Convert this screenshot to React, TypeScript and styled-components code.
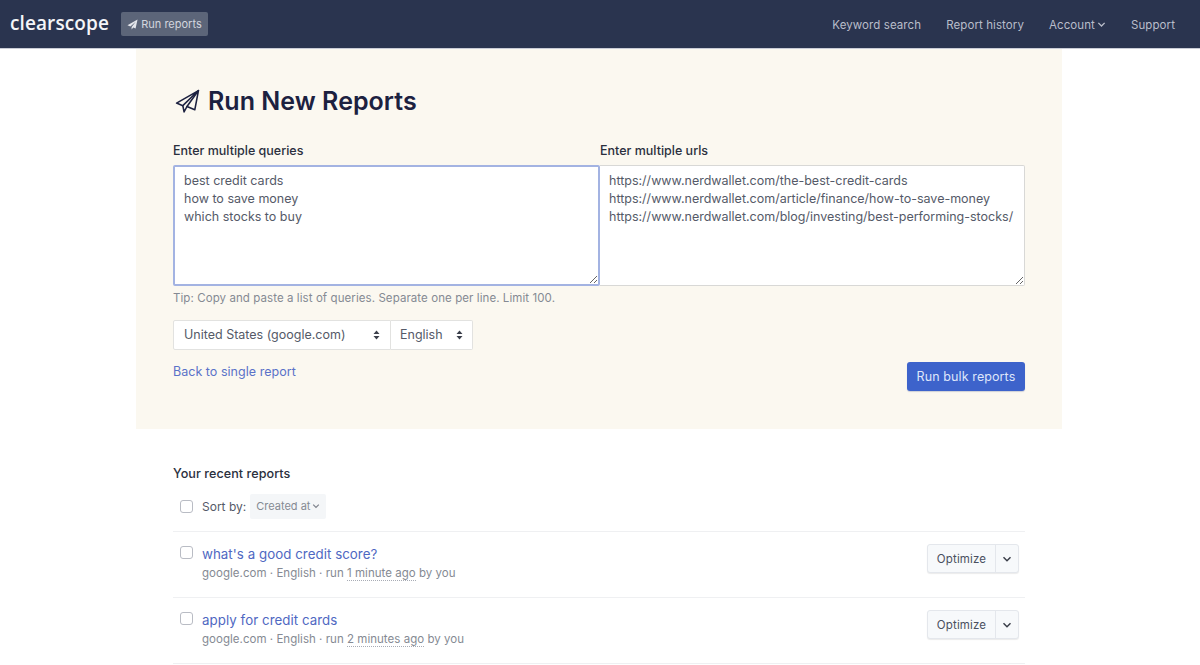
import React from "react";
import styled, { createGlobalStyle } from "styled-components";

const Global = createGlobalStyle`
  html, body { margin: 0; padding: 0; background: #fff; height: 665px; overflow: hidden; }
  body { font-family: Inter, "Liberation Sans", sans-serif; color: #1a202c; }
  * { box-sizing: border-box; }
`;

const Nav = styled.header`
  height: 49px; background: #2a344f; display: flex; align-items: center;
  justify-content: space-between; padding: 0 25px 0 10px; border-bottom: 1px solid #c9ccd6;
`;
const NavLeft = styled.div`display: flex; align-items: center; gap: 12px;`;
const Logo = styled.span`
  font-family: "Open Sans", "Noto Sans", sans-serif; font-weight: 600; font-size: 19px;
  color: #f4f5f8; letter-spacing: 0.1px; line-height: 24px; position: relative; top: -1px;
`;
const RunPill = styled.div`
  height: 24px; width: 87px; border-radius: 2px; background: #5c6579; color: #d3d6de;
  display: flex; align-items: center; justify-content: center; gap: 3px; font-size: 11px;
`;
const NavRight = styled.nav`display: flex; align-items: center; gap: 25px;`;
const NavItem = styled.span`
  color: #b9bdca; font-size: 11.5px; display: inline-flex; align-items: center; gap: 2px;
  letter-spacing: 0.09px; padding-top: 1px;
`;

const Main = styled.main`width: 926px; margin: 0 auto 0 136px;`;
const Panel = styled.section`
  height: 380px; background: #fbf8f0; padding: 36px 37px 0 37px;
`;
const Title = styled.h1`
  margin: 0; height: 32px; display: flex; align-items: center; gap: 8px;
  font-size: 25px; font-weight: 600; color: #1c2140; line-height: 32px; letter-spacing: .03px;
`;
const TitleIcon = styled.span`display: inline-flex; margin-left: 2px;`;
const Columns = styled.div`display: grid; grid-template-columns: 427px 425px; margin-top: 26px;`;
const Field = styled.div`display: flex; flex-direction: column;`;
const Label = styled.label`
  font-size: 12.5px; font-weight: 500; color: #2a2f3d; line-height: 16px; height: 16px; margin-bottom: 6px;
`;
const Area = styled.textarea<{ $focus?: boolean }>`
  height: 121px; width: 100%; display: block; margin: 0; resize: vertical; outline: none;
  font-family: Inter, sans-serif; font-size: 12.5px; line-height: 18.2px; color: #555a68;
  background: #fff; padding: 5px 9px; white-space: pre; overflow: hidden; border-radius: ${p => p.$focus ? "2px" : "0 2px 2px 0"};
  border: ${p => p.$focus ? "2px solid #a3b3e2" : "1px solid #d8d8d6"};
  ${p => p.$focus ? "" : "border-left: none; padding-left: 9px; padding-top: 6px;"}
`;
const Tip = styled.p`margin: 5px 0 0; font-size: 11.5px; line-height: 15px; color: #858a93; letter-spacing: 0.08px; white-space: nowrap;`;
const SelectGroup = styled.div`display: flex; margin-top: 14px; width: 300px; height: 30px;`;
const SelectBox = styled.div<{ $w: number; $last?: boolean }>`
  width: ${p => p.$w}px; height: 30px; background: #fff; border: 1px solid #e2e2e0;
  ${p => p.$last ? "border-left: none; border-radius: 0 2px 2px 0;" : "border-radius: 2px 0 0 2px;"}
  display: flex; align-items: center; justify-content: space-between;
  padding: 0 ${p => p.$last ? "9px 1px 9px" : "10px 1px 10px"};
  font-size: 12.5px; color: #555a68;
`;
const Bottom = styled.div`display: flex; justify-content: space-between; align-items: flex-start; margin-top: 12px;`;
const BackLink = styled.a`font-size: 12.5px; color: #5a72c8; line-height: 18px; margin-top: 1px; letter-spacing: .03px;`;
const Primary = styled.button`
  width: 118px; height: 29px; border: none; border-radius: 3px; background: #3d63cb; color: #dfe6fa;
  font-family: Inter, sans-serif; font-size: 12.5px; padding: 0; letter-spacing: 0.1px;
  box-shadow: 0 1px 1px rgba(30,50,120,.2);
`;

const Recent = styled.section`padding: 37px 37px 0;`;
const RecentTitle = styled.h2`
  margin: 0; font-size: 12.6px; font-weight: 500; line-height: 16px; color: #2a2f3d; letter-spacing: .05px;
`;
const SortRow = styled.div`
  display: flex; align-items: center; height: 26px; margin-top: 11px; padding-left: 7px;
`;
const Check = styled.input.attrs({ type: "checkbox" })`
  appearance: none; width: 13px; height: 13px; margin: 0; flex: none; border: 1px solid #b9bcc4;
  border-radius: 3px; background: #fff;
`;
const SortLabel = styled.span`font-size: 12px; color: #555a68; margin-left: 9px;`;
const SortPill = styled.div`
  display: flex; align-items: center; gap: 2px; height: 25px; padding: 0 6px; margin-left: 4px;
  background: #f4f6f8; border-radius: 2px; font-size: 11px; color: #858a93;
`;
const Row = styled.div`
  height: 66px; border-top: 1px solid #eff0f2; display: flex; justify-content: space-between;
  padding: 13px 6px 0 7px; &:last-child { border-bottom: 1px solid #eff0f2; height: 67px; }
`;
const SortWrap = styled.div`margin-bottom: 12px;`;
const RowLeft = styled.div`display: flex; align-items: flex-start; gap: 9px;`;
const RowCheck = styled(Check)`margin-top: 1px;`;
const RowText = styled.div`display: flex; flex-direction: column;`;
const RowTitle = styled.a`font-size: 13.3px; line-height: 18px; color: #4f68c2; letter-spacing: 0.05px;`;
const Meta = styled.div`font-size: 11.5px; line-height: 15px; margin-top: 3px; color: #858a93; letter-spacing: 0.03px;`;
const Dotted = styled.span`border-bottom: 1px dotted #a8acb5;`;
const BtnGroup = styled.div`
  display: flex; height: 29px; border-radius: 3px; border: 1px solid #e4e7ec; background: #f7f9fb;
  box-shadow: 0 1px 1px rgba(0,0,0,.08); margin-top: -1px;
`;
const BtnMain = styled.div`
  width: 68px; display: flex; align-items: center; justify-content: center; font-size: 11.5px;
  color: #4a5060; border-right: 1px solid #e4e7ec; letter-spacing: .15px;
`;
const BtnCaret = styled.div`width: 22px; display: flex; align-items: center; justify-content: center;`;

const Plane = ({ size = 22 }: { size?: number }) => (
  <svg width={size} height={size} viewBox="0 0 24 24" fill="none" stroke="#1c2140" strokeWidth="1.5" strokeLinejoin="round" strokeLinecap="round">
    <path d="M22.5 1.5 1.5 13.5l6 2.5L22.5 1.5Z" />
    <path d="M22.5 1.5 19 20l-7.5-3.2L22.5 1.5Z" />
    <path d="M7.5 16 8.7 22l2.8-5.2" />
  </svg>
);
const PlaneSolid = () => (
  <svg width="11" height="11" viewBox="0 0 24 24" fill="#e4e6ec">
    <path d="M23 1 1 13.5l6.4 2.6L19 6 10 17.2v5.8l3.7-4.6 5 2.1L23 1Z" />
  </svg>
);
const Chevron = ({ color = "#b9bdca", size = 9 }: { color?: string; size?: number }) => (
  <svg width={size} height={size} viewBox="0 0 10 10" fill="none" stroke={color} strokeWidth="1.5">
    <path d="M1.5 3.2 5 6.7l3.5-3.5" />
  </svg>
);
const Updown = () => (
  <svg width="7" height="10" viewBox="0 0 7 10" fill="#3b3f4a">
    <path d="M3.5 0.5 6.5 4h-6ZM3.5 9.5 .5 6h6Z" />
  </svg>
);

const queries = "best credit cards\nhow to save money\nwhich stocks to buy";
const urls = "https://www.nerdwallet.com/the-best-credit-cards\nhttps://www.nerdwallet.com/article/finance/how-to-save-money\nhttps://www.nerdwallet.com/blog/investing/best-performing-stocks/";

const reports = [
  { title: "what's a good credit score?", ago: "1 minute ago" },
  { title: "apply for credit cards", ago: "2 minutes ago" },
];

export default function App() {
  return (
    <>
      <Global />
      <Nav>
        <NavLeft>
          <Logo>clearscope</Logo>
          <RunPill><PlaneSolid />Run reports</RunPill>
        </NavLeft>
        <NavRight>
          <NavItem>Keyword search</NavItem>
          <NavItem>Report history</NavItem>
          <NavItem>Account<Chevron /></NavItem>
          <NavItem>Support</NavItem>
        </NavRight>
      </Nav>
      <Main>
        <Panel>
          <Title><TitleIcon><Plane size={25} /></TitleIcon>Run New Reports</Title>
          <Columns>
            <Field>
              <Label>Enter multiple queries</Label>
              <Area $focus readOnly defaultValue={queries} />
              <Tip>Tip: Copy and paste a list of queries. Separate one per line. Limit 100.</Tip>
              <SelectGroup>
                <SelectBox $w={218}>United States (google.com)<Updown /></SelectBox>
                <SelectBox $w={82} $last>English<Updown /></SelectBox>
              </SelectGroup>
            </Field>
            <Field>
              <Label>Enter multiple urls</Label>
              <Area readOnly defaultValue={urls} />
            </Field>
          </Columns>
          <Bottom>
            <BackLink>Back to single report</BackLink>
            <Primary>Run bulk reports</Primary>
          </Bottom>
        </Panel>
        <Recent>
          <RecentTitle>Your recent reports</RecentTitle>
          <SortWrap>
            <SortRow>
              <Check />
              <SortLabel>Sort by:</SortLabel>
              <SortPill>Created at<Chevron color="#7d828c" size={8} /></SortPill>
            </SortRow>
          </SortWrap>
          {reports.map(r => (
            <Row key={r.title}>
              <RowLeft>
                <RowCheck />
                <RowText>
                  <RowTitle>{r.title}</RowTitle>
                  <Meta>google.com · English · run <Dotted>{r.ago}</Dotted> by you</Meta>
                </RowText>
              </RowLeft>
              <BtnGroup>
                <BtnMain>Optimize</BtnMain>
                <BtnCaret><Chevron color="#3b3f4a" size={10} /></BtnCaret>
              </BtnGroup>
            </Row>
          ))}
        </Recent>
      </Main>
    </>
  );
}
